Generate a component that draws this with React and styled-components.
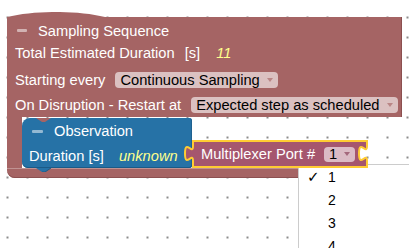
import React from 'react'
import styled, { createGlobalStyle } from 'styled-components'

const SEQ = '#a56464'
const OBS = '#2672a6'
const MUX = '#a5566e'
const SELECTED = '#ffcc33'

const GlobalStyle = createGlobalStyle`
  html, body {
    margin: 0;
    padding: 0;
    background: #fff;
  }
  body {
    font-family: "Liberation Sans", Arial, sans-serif;
  }
`

const Workspace = styled.div`
  position: relative;
  width: 409px;
  height: 248px;
  overflow: hidden;
  box-sizing: border-box;
  padding: 12px 0 0 7px;
  background-color: #fff;
  background-image: radial-gradient(circle, #8c8c8c 0.75px, transparent 0.95px);
  background-size: 20px 20px;
  background-position: -2.5px 7.5px;
  font-family: "Liberation Sans", Arial, sans-serif;
  font-size: 11pt;
  color: #fff;
`

const SequenceBlock = styled.div`
  display: flex;
  flex-direction: column;
  width: 395px;
`

const HatSvg = styled.svg`
  display: block;
  margin-bottom: -1px;
`

const SeqBody = styled.div`
  background: ${SEQ};
  padding-left: 8px;
  box-shadow: inset -1px 0 0 #8c5050;
`

const Row = styled.div`
  display: flex;
  align-items: center;
  gap: ${(p) => p.$gap || 10}px;
  height: ${(p) => p.$h}px;
  margin-top: ${(p) => p.$mt || 0}px;
  white-space: nowrap;
`

const Label = styled.span``

const Value = styled.span`
  font-style: italic;
  color: #ffff8c;
  margin-left: ${(p) => p.$ml || 0}px;
`

const Collapse = styled.span`
  width: ${(p) => p.$w}px;
  height: 3px;
  margin-left: ${(p) => p.$ml}px;
  margin-right: 1px;
  border-radius: 1px;
  background: rgba(255, 255, 255, 0.5);
`

const Pill = styled.span`
  display: inline-flex;
  align-items: center;
  height: ${(p) => p.$h || 16}px;
  padding: 0 5px;
  border-radius: 4px;
  background: rgba(255, 255, 255, 0.6);
  color: #000;
`

const Arrow = styled.span`
  width: 0;
  height: 0;
  margin-left: 7px;
  border-left: 3.5px solid transparent;
  border-right: 3.5px solid transparent;
  border-top: 4px solid ${(p) => p.$c};
`

const StatementRow = styled.div`
  display: flex;
  height: 51px;
`

const LeftArm = styled.div`
  width: 15px;
  background: ${SEQ};
`

const Slot = styled.div`
  display: flex;
  align-items: flex-start;
`

const ObsBlock = styled.div`
  position: relative;
  display: flex;
  flex-direction: column;
  box-sizing: border-box;
  width: 170px;
  height: 50px;
  margin-top: 1px;
  padding-left: 7px;
  border-radius: 8px 3px 3px 6px;
  background: ${OBS};
  box-shadow: inset 0 -1px 0 #1b5a86, inset -1px 0 0 #1f6190;
`

const Notch = styled.svg`
  position: absolute;
  left: 14px;
  top: ${(p) => (p.$bottom ? '100%' : '0')};
`

const MuxBlock = styled.div`
  position: relative;
  z-index: 2;
  display: flex;
  align-items: center;
  gap: 9px;
  box-sizing: border-box;
  width: 166px;
  height: 28px;
  margin-top: 23px;
  padding-left: 7px;
  border: 2px solid ${SELECTED};
  border-right: none;
  background: ${MUX};
  white-space: nowrap;
`

const Tab = styled.svg`
  position: absolute;
  top: -2px;
  left: ${(p) => (p.$right ? '100%' : '-11px')};
  overflow: visible;
`

const BottomArm = styled.div`
  height: 10px;
  border-bottom-left-radius: 8px;
  background: ${SEQ};
  box-shadow: inset 0 1px 0 rgba(255, 255, 255, 0.3), inset 0 -1px 0 #8c5050;
`

const Menu = styled.div`
  position: absolute;
  left: 298px;
  top: 164px;
  width: 130px;
  height: 100px;
  background: #fff;
  border: 1px solid #cccccc;
  color: #000;
  font-family: "Liberation Sans", Arial, sans-serif;
  font-size: 14px;
`

const MenuItem = styled.div`
  display: flex;
  align-items: center;
  height: 23px;
`

const Check = styled.span`
  width: 21px;
  margin-left: 8px;
  font-family: "DejaVu Sans", sans-serif;
  font-size: 15px;
`

const tabCurve = 'c0,10 -8,-8 -8,7.5 s8,-2.5 8,7.5'

const App = () => (
  <Workspace>
    <GlobalStyle />
    <SequenceBlock>
      <HatSvg width="98" height="6" viewBox="0 0 98 6">
        <path d="M0,6 L0,5 C28,-1.7 70,-1.7 98,5 L98,6 Z" fill={SEQ} />
      </HatSvg>
      <SeqBody>
        <Row $h={27}>
          <Collapse $w={10} $ml={2} />
          <Label>Sampling Sequence</Label>
        </Row>
        <Row $h={17}>
          <Label>Total Estimated Duration</Label>
          <Label>[s]</Label>
          <Value $ml={6}>11</Value>
        </Row>
        <Row $h={25} $mt={6}>
          <Label>Starting every</Label>
          <Pill>
            Continuous Sampling
            <Arrow $c="#b98686" />
          </Pill>
        </Row>
        <Row $h={25}>
          <Label>On Disruption - Restart at</Label>
          <Pill>
            Expected step as scheduled
            <Arrow $c="#b98686" />
          </Pill>
        </Row>
      </SeqBody>
      <StatementRow>
        <LeftArm />
        <Slot>
          <ObsBlock>
            <Notch width="15" height="4" viewBox="0 0 15 4">
              <path d="M0,0 L6,4 L9,4 L15,0 Z" fill={SEQ} />
            </Notch>
            <Row $h={26}>
              <Collapse $w={11} $ml={3} />
              <Label>Observation</Label>
            </Row>
            <Row $h={24} $gap={15}>
              <Label>Duration [s]</Label>
              <Value>unknown</Value>
            </Row>
            <Notch $bottom width="15" height="4" viewBox="0 0 15 4">
              <path d="M0,0 L6,4 L9,4 L15,0 Z" fill={OBS} />
              <path d="M6,4 L9,4 L15,0" fill="none" stroke="#1b5a86" strokeWidth="1" />
            </Notch>
          </ObsBlock>
          <MuxBlock>
            <Tab width="13" height="28" viewBox="0 0 13 28">
              <path d={`M10,6 ${tabCurve} L13,21 L13,6 Z`} fill={MUX} />
              <path d={`M10,6 ${tabCurve}`} fill="none" stroke={SELECTED} strokeWidth="2" />
            </Tab>
            <Label>Multiplexer Port #</Label>
            <Pill $h={15}>
              1
              <Arrow $c="#a4687c" />
            </Pill>
            <Tab $right width="11" height="28" viewBox="0 0 11 28">
              <path d={`M0,0 L9,0 L9,6 ${tabCurve} L9,28 L0,28 Z`} fill={MUX} />
              <path d={`M0,1 L9,1 L9,6 ${tabCurve} L9,27 L0,27`} fill="none" stroke={SELECTED} strokeWidth="2" />
            </Tab>
          </MuxBlock>
        </Slot>
      </StatementRow>
      <BottomArm />
    </SequenceBlock>
    <Menu>
      <MenuItem>
        <Check>✓</Check>
        <span>1</span>
      </MenuItem>
      <MenuItem>
        <Check />
        <span>2</span>
      </MenuItem>
      <MenuItem>
        <Check />
        <span>3</span>
      </MenuItem>
      <MenuItem>
        <Check />
        <span>4</span>
      </MenuItem>
    </Menu>
  </Workspace>
)

export default App
